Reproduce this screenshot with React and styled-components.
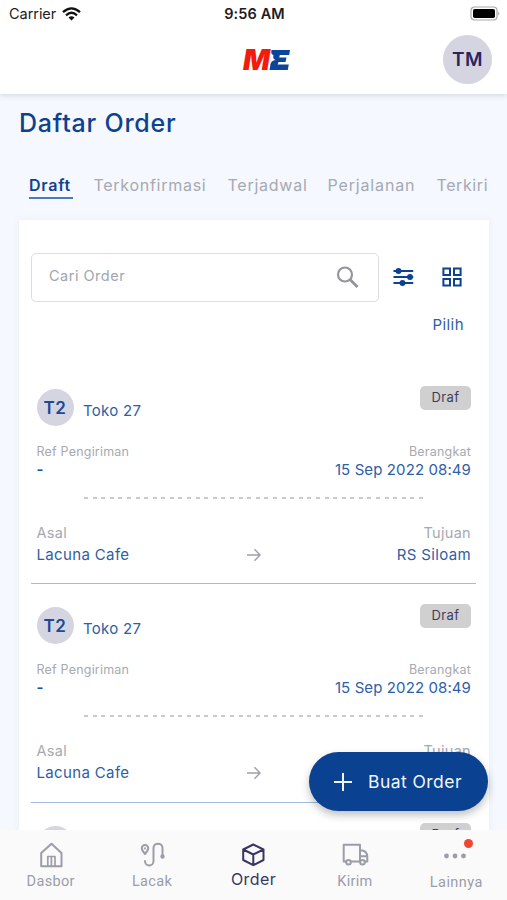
import React from "react";
import styled, { createGlobalStyle } from "styled-components";

const Global = createGlobalStyle`
  * { box-sizing: border-box; }
  body { margin: 0; background: #f5f8fe; font-family: Inter, "Open Sans", sans-serif; }
  svg { display: block; flex: none; }
`;

const Screen = styled.div`
  position: relative;
  width: 507px;
  height: 900px;
  display: flex;
  flex-direction: column;
  overflow: hidden;
  background: #f5f8fe;
`;

const Top = styled.header`
  position: relative;
  z-index: 1;
  flex: none;
  height: 94px;
  background: #fff;
  box-shadow: 0 1px 6px rgba(60, 70, 90, 0.2);
`;

const StatusBar = styled.div`
  display: grid;
  grid-template-columns: 1fr auto 1fr;
  align-items: center;
  height: 27px;
  padding: 0 7px 0 9px;
  color: #1c1c1e;
`;

const Carrier = styled.div`
  display: flex;
  align-items: center;
  gap: 6px;
  font-size: 14.5px;
  letter-spacing: -0.05px;
`;

const Clock = styled.div`
  font-size: 14.5px;
  font-weight: 600;
  letter-spacing: 0.1px;
`;

const BatterySlot = styled.div`
  justify-self: end;
`;

const Brand = styled.div`
  display: flex;
  align-items: center;
  justify-content: space-between;
  height: 65px;
  padding: 0 15px 0 242px;
`;

const Avatar = styled.div`
  display: flex;
  align-items: center;
  justify-content: center;
  flex: none;
  width: ${(p) => p.$size}px;
  height: ${(p) => p.$size}px;
  border-radius: 50%;
  background: #d5d4e1;
  color: ${(p) => p.$color};
  font-size: ${(p) => p.$font}px;
  font-weight: 600;
  letter-spacing: 0.5px;
`;

const Title = styled.h1`
  margin: 14px 0 0 19px;
  font-size: 25px;
  line-height: 30px;
  font-weight: 500;
  letter-spacing: 0.78px;
  color: #0d4291;
`;

const Tabs = styled.nav`
  display: flex;
  gap: 21px;
  margin: 37px 0 0 29px;
  height: 45px;
  flex: none;
`;

const Tab = styled.div`
  flex: none;
  width: ${(p) => p.$width}px;
  height: 24px;
  line-height: 21px;
  font-size: 16px;
  white-space: nowrap;
  letter-spacing: ${(p) => p.$spacing}px;
  font-weight: ${(p) => (p.$active ? 600 : 400)};
  color: ${(p) => (p.$active ? "#0d4291" : "#a5a9b3")};
  border-bottom: 2px solid ${(p) => (p.$active ? "#4a7ab8" : "transparent")};
`;

const Card = styled.main`
  flex: none;
  width: 470px;
  height: 900px;
  margin-left: 19px;
  padding: 33px 12px 0;
  background: #fff;
  box-shadow: 0 0 6px rgba(150, 160, 190, 0.14);
`;

const Tools = styled.div`
  display: flex;
  align-items: center;
`;

const Search = styled.div`
  display: flex;
  align-items: center;
  justify-content: space-between;
  width: 348px;
  height: 49px;
  padding: 0 18px 0 17px;
  border: 1.5px solid #dcdde1;
  border-radius: 5px;
  color: #a2a5af;
  font-size: 14.5px;
  line-height: 20px;
  letter-spacing: 0.5px;

  & > span { margin-top: -3px; }
  & > svg { margin-top: -2px; }
`;

const FilterButton = styled.div`
  margin: -1px 0 0 13.5px;
`;

const GridButton = styled.div`
  margin: -1px 0 0 28px;
`;

const Select = styled.div`
  margin: 13px 13px 0 0;
  height: 51px;
  line-height: 20px;
  text-align: right;
  font-size: 15px;
  letter-spacing: 0.45px;
  color: #2d5ea8;
`;

const Order = styled.article`
  display: flex;
  flex-direction: column;
  height: 218.4px;
  padding: 19px 5px 0 5.5px;
  border-bottom: 1.5px solid #a6bbdb;
  margin-right: 1px;
`;

const Shop = styled.div`
  display: flex;
  height: 46px;
  padding-top: 4px;
`;

const ShopName = styled.div`
  flex: 1;
  padding: 12px 0 0 9.5px;
  line-height: 20px;
  font-size: 15px;
  letter-spacing: 0.3px;
  color: #2d5ea8;
`;

const Badge = styled.div`
  width: 51px;
  height: 24px;
  margin-top: -3px;
  border-radius: 5px;
  background: #d0d0d1;
  color: #3f3c60;
  font-size: 13px;
  line-height: 23px;
  text-align: center;
  letter-spacing: 0.4px;
`;

const Pair = styled.div`
  display: flex;
  justify-content: space-between;
  height: ${(p) => p.$height}px;
  line-height: ${(p) => p.$height}px;
  margin-top: ${(p) => p.$top || 0}px;
  font-size: ${(p) => p.$font}px;
  letter-spacing: ${(p) => p.$spacing}px;
  color: ${(p) => (p.$value ? "#2d5ea8" : "#a7a9b1")};
`;

const Missing = styled.span`
  color: #1b4e9c;
  font-weight: 600;
`;

const Rule = styled.div`
  width: 339px;
  height: 2px;
  margin: 17.5px 0 0 47.5px;
  background: repeating-linear-gradient(90deg, #c9cacd 0 4px, transparent 4px 8.59px);
`;

const Fab = styled.button`
  position: absolute;
  left: 309px;
  top: 752px;
  z-index: 2;
  display: flex;
  align-items: center;
  gap: 16px;
  width: 179px;
  height: 59px;
  padding: 0 0 0 25px;
  border: 0;
  border-radius: 30px;
  background: #0a4190;
  box-shadow: 0 4px 8px rgba(0, 0, 0, 0.26);
  color: #f2f6fc;
  font: 400 17.5px Inter, sans-serif;
  letter-spacing: 0.45px;
  white-space: nowrap;
`;

const BottomNav = styled.nav`
  position: absolute;
  left: 0;
  right: 0;
  bottom: 0;
  z-index: 1;
  display: grid;
  grid-template-columns: repeat(5, 1fr);
  height: 70px;
  background: #fafafb;
`;

const NavItem = styled.div`
  position: relative;
  display: flex;
  flex-direction: column;
  align-items: center;
  padding-top: 11px;
  color: ${(p) => (p.$active ? "#39365f" : "#9b9da9")};
`;

const NavLabel = styled.div`
  font-family: ${(p) => (p.$active ? "Inter" : "Roboto")}, sans-serif;
  font-size: ${(p) => (p.$active ? 16 : 14.5)}px;
  letter-spacing: ${(p) => p.$spacing}px;
  line-height: 20px;
  margin-top: ${(p) => p.$top}px;
`;

const Dot = styled.span`
  position: absolute;
  left: 58.5px;
  top: 8.5px;
  width: 9px;
  height: 9px;
  border-radius: 50%;
  background: #f04632;
`;

const Wifi = () => (
  <svg width="19" height="14" viewBox="0 0 19 14" fill="none" stroke="#111" strokeWidth="2.3">
    <path d="M1 5.2Q9.5-2.5 18 5.2" />
    <path d="M4 8.3Q9.5 3.3 15 8.3" />
    <path d="M6.5 10.6Q9.5 8 12.5 10.6L9.5 13.6Z" fill="#111" stroke="none" />
  </svg>
);

const Battery = () => (
  <svg width="30" height="15" viewBox="0 0 30 15">
    <rect x="1" y="1" width="26" height="13" rx="3.5" fill="#fff" stroke="#aaa" strokeWidth="1.2" />
    <rect x="3" y="3" width="22" height="9" rx="1.8" fill="#000" />
    <path d="M28.2 5.5Q30.5 7.5 28.2 9.5Z" fill="#aaa" />
  </svg>
);

const Logo = () => (
  <svg width="50" height="36" viewBox="0 -5 50 36" role="img" aria-label="ME">
    <text x="1" y="23.3" fontFamily="Inter, sans-serif" fontSize="28" fontWeight="900" fontStyle="italic" fill="#f31b0c" textLength="27" lengthAdjust="spacingAndGlyphs">M</text>
    <g fill="#0d459a">
      <path d="M29.5 3H48L47.2 8H31.5Q28.5 7.5 29.5 3Z" />
      <path d="M31.5 7.5H38L37.2 10.5H44.5L43.5 15H36.5L35.5 18H28.3Q29 13.5 33.5 13Q30.5 12 31.5 7.5Z" />
      <path d="M28.5 17.5H46.8L45.8 23H27.5Z" />
    </g>
  </svg>
);

const SearchIcon = () => (
  <svg width="24" height="24" viewBox="0 0 24 24" fill="none" stroke="#92949e" strokeWidth="2.2">
    <circle cx="9" cy="9.5" r="7" />
    <path d="M14 14.5L21.5 22" strokeWidth="2.8" />
  </svg>
);

const FilterIcon = () => (
  <svg width="21" height="20" viewBox="0 0 21 20" stroke="#0d4291" strokeWidth="1.9" strokeLinecap="round" fill="#0d4291">
    <path d="M1.2 4H19.5M1.2 10H19.5M1.2 16H19.5" />
    <circle cx="5.5" cy="4" r="2" />
    <circle cx="17" cy="10" r="2" />
    <circle cx="9.5" cy="16" r="2" />
  </svg>
);

const GridIcon = () => (
  <svg width="20" height="20" viewBox="0 0 20 20" fill="none" stroke="#0d4291" strokeWidth="2">
    <path d="M1.4 1.4H8V8H1.4ZM12 1.4H18.6V8H12ZM1.4 12H8V18.6H1.4ZM12 12H18.6V18.6H12Z" />
  </svg>
);

const ArrowSlot = styled.span`
  margin-right: 19px;
`;

const Arrow = () => (
  <ArrowSlot>
    <svg width="14" height="22" viewBox="0 0 14 22" fill="none" stroke="#9fa1aa" strokeWidth="1.5">
      <path d="M0 11H13M7.5 5.2L13 11L7.5 16.8" />
    </svg>
  </ArrowSlot>
);

const Plus = () => (
  <svg width="18" height="18" viewBox="0 0 18 18" stroke="#f2f6fc" strokeWidth="2">
    <path d="M9 0V18M0 9H18" />
  </svg>
);

const NavSvg = ({ children }) => (
  <svg width="28" height="28" viewBox="0 0 28 28" fill="none" stroke="currentColor" strokeWidth="2" strokeLinejoin="round" strokeLinecap="round">
    {children}
  </svg>
);

const orders = [1, 2, 3];

function OrderRow() {
  return (
    <Order>
      <Shop>
        <Avatar $size={37} $font={17} $color="#1b4a96">T2</Avatar>
        <ShopName>Toko 27</ShopName>
        <Badge>Draf</Badge>
      </Shop>
      <Pair $height={18} $top={12} $font={12.5} $spacing={0.2}>
        <span>Ref Pengiriman</span>
        <span>Berangkat</span>
      </Pair>
      <Pair $value $height={18} $font={15} $spacing={0.1}>
        <Missing>-</Missing>
        <span>15 Sep 2022 08:49</span>
      </Pair>
      <Rule />
      <Pair $height={22} $top={23} $font={14.5} $spacing={0.3}>
        <span>Asal</span>
        <span>Tujuan</span>
      </Pair>
      <Pair $value $height={22} $font={15} $spacing={0.35}>
        <span>Lacuna Cafe</span>
        <Arrow />
        <span>RS Siloam</span>
      </Pair>
    </Order>
  );
}

export default function App() {
  return (
    <Screen>
      <Global />
      <Top>
        <StatusBar>
          <Carrier>Carrier <Wifi /></Carrier>
          <Clock>9:56 AM</Clock>
          <BatterySlot><Battery /></BatterySlot>
        </StatusBar>
        <Brand>
          <Logo />
          <Avatar $size={49} $font={19} $color="#2a2560">TM</Avatar>
        </Brand>
      </Top>
      <Title>Daftar Order</Title>
      <Tabs>
        <Tab $active $width={43.5} $spacing={0.75}>Draft</Tab>
        <Tab $width={113} $spacing={0.72}>Terkonfirmasi</Tab>
        <Tab $width={79} $spacing={0.75}>Terjadwal</Tab>
        <Tab $width={88} $spacing={0.85}>Perjalanan</Tab>
        <Tab $width={52} $spacing={0.6}>Terkiri</Tab>
      </Tabs>
      <Card>
        <Tools>
          <Search><span>Cari Order</span><SearchIcon /></Search>
          <FilterButton><FilterIcon /></FilterButton>
          <GridButton><GridIcon /></GridButton>
        </Tools>
        <Select>Pilih</Select>
        {orders.map((id) => <OrderRow key={id} />)}
      </Card>
      <Fab><Plus />Buat Order</Fab>
      <BottomNav>
        <NavItem>
          <NavSvg>
            <path d="M4.2 12L14.5 2.8L24.5 12V25.2H4.2Z" />
            <path d="M10.8 25V15.5H18V25M14.4 16V25" strokeWidth="1.7" />
          </NavSvg>
          <NavLabel $spacing={0.35} $top={3}>Dasbor</NavLabel>
        </NavItem>
        <NavItem>
          <NavSvg>
            <path d="M7 13Q3.8 9.5 3.8 7.3A3.2 3.2 0 0 1 10.2 7.3Q10.2 9.5 7 13ZM7 7.3V7.5" />
            <path d="M7 20C7 26 15.5 26 15.5 20V7C15.5 1.3 24.5 1.3 24.5 7V15" />
            <circle cx="24.5" cy="15.5" r="1.2" />
          </NavSvg>
          <NavLabel $spacing={0.35} $top={3}>Lacak</NavLabel>
        </NavItem>
        <NavItem $active>
          <NavSvg>
            <path d="M14.3 3.5L24.5 8.5V19L14.3 24.2L4.2 19V8.5ZM4.2 8.5L14.3 13.5L24.5 8.5M14.3 13.5V24" />
          </NavSvg>
          <NavLabel $active $spacing={0.4} $top={0}>Order</NavLabel>
        </NavItem>
        <NavItem>
          <NavSvg>
            <path d="M5 20.5H2.7V3.8H19V20.5H10.5M19 9.5H21.5Q26 10.5 26.3 15.5V20.5H24.5M19 15.3H26" />
            <circle cx="7.5" cy="21.3" r="2.3" />
            <circle cx="21.5" cy="21.3" r="2.3" />
          </NavSvg>
          <NavLabel $spacing={0.3} $top={3}>Kirim</NavLabel>
        </NavItem>
        <NavItem>
          <NavSvg>
            <g fill="currentColor" stroke="none">
              <circle cx="4.5" cy="15" r="2.4" />
              <circle cx="13" cy="15" r="2.4" />
              <circle cx="21.5" cy="15" r="2.4" />
            </g>
          </NavSvg>
          <Dot />
          <NavLabel $spacing={0.45} $top={4}>Lainnya</NavLabel>
        </NavItem>
      </BottomNav>
    </Screen>
  );
}
